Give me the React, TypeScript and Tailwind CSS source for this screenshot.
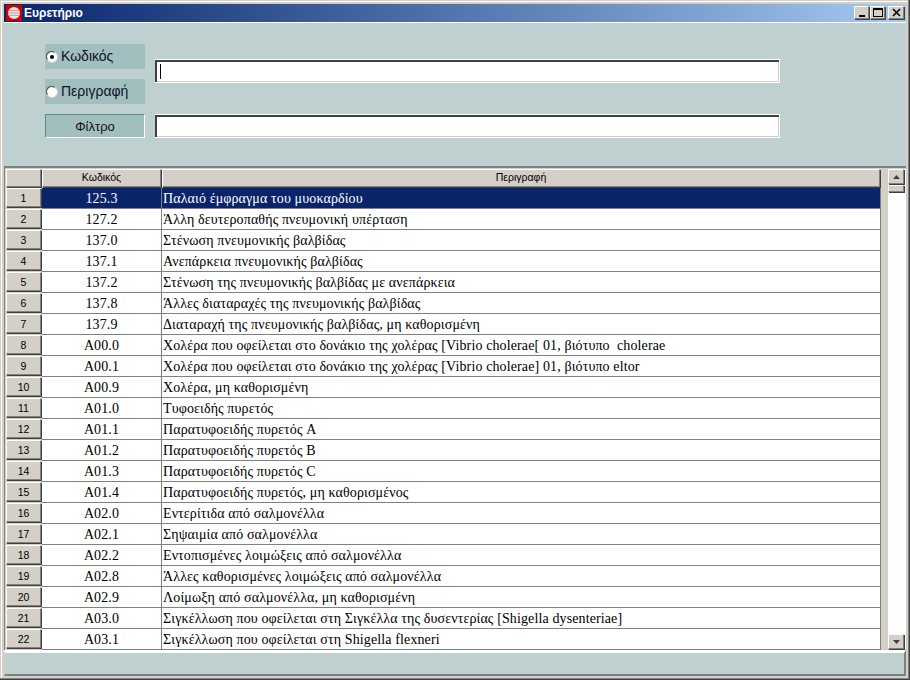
import React from 'react';

const rows: [string, string][] = [
  ['125.3', 'Παλαιό έμφραγμα του μυοκαρδίου'],
  ['127.2', 'Άλλη δευτεροπαθής πνευμονική υπέρταση'],
  ['137.0', 'Στένωση πνευμονικής βαλβίδας'],
  ['137.1', 'Ανεπάρκεια πνευμονικής βαλβίδας'],
  ['137.2', 'Στένωση της πνευμονικής βαλβίδας με ανεπάρκεια'],
  ['137.8', 'Άλλες διαταραχές της πνευμονικής βαλβίδας'],
  ['137.9', 'Διαταραχή της πνευμονικής βαλβίδας, μη καθορισμένη'],
  ['A00.0', 'Χολέρα που οφείλεται στο δονάκιο της χολέρας [Vibrio cholerae[ 01, βιότυπο  cholerae'],
  ['A00.1', 'Χολέρα που οφείλεται στο δονάκιο της χολέρας [Vibrio cholerae] 01, βιότυπο eltor'],
  ['A00.9', 'Χολέρα, μη καθορισμένη'],
  ['A01.0', 'Τυφοειδής πυρετός'],
  ['A01.1', 'Παρατυφοειδής πυρετός A'],
  ['A01.2', 'Παρατυφοειδής πυρετός B'],
  ['A01.3', 'Παρατυφοειδής πυρετός C'],
  ['A01.4', 'Παρατυφοειδής πυρετός, μη καθορισμένος'],
  ['A02.0', 'Εντερίτιδα από σαλμονέλλα'],
  ['A02.1', 'Σηψαιμία από σαλμονέλλα'],
  ['A02.2', 'Εντοπισμένες λοιμώξεις από σαλμονέλλα'],
  ['A02.8', 'Άλλες καθορισμένες λοιμώξεις από σαλμονέλλα'],
  ['A02.9', 'Λοίμωξη από σαλμονέλλα, μη καθορισμένη'],
  ['A03.0', 'Σιγκέλλωση που οφείλεται στη Σιγκέλλα της δυσεντερίας [Shigella dysenteriae]'],
  ['A03.1', 'Σιγκέλλωση που οφείλεται στη Shigella flexneri'],
];

const raised = 'border border-t-white border-l-white border-r-[#808080] border-b-[#808080] shadow-[1px_1px_0_#404040]';

function WinButton({ children, className = '' }: { children: React.ReactNode; className?: string }) {
  return (
    <div className={`h-[13px] mt-[2px] self-start bg-[#d4d0c8] flex items-center justify-center ${raised} ${className}`}>
      {children}
    </div>
  );
}

function Radio({ label, checked }: { label: string; checked?: boolean }) {
  return (
    <div className="h-[25px] bg-[#a2bfbf] flex items-center pl-[1px] gap-[3px]">
      <svg width="12" height="12" viewBox="0 0 12 12">
        <circle cx="6" cy="6" r="5.5" fill="#fff" stroke="#d4d0c8" />
        <path d="M1.5 8.5A5 5 0 0 1 8.5 1.5" fill="none" stroke="#606060" strokeWidth="1.2" />
        {checked && <circle cx="6" cy="6" r="2" fill="#000" />}
      </svg>
      <span className="text-[14px] text-[#10102a]">{label}</span>
    </div>
  );
}

function Input({ children }: { children?: React.ReactNode }) {
  return (
    <div className="w-[625px] h-[24px] border-t border-r border-b border-white">
      <div className="h-full bg-white shadow-[inset_2px_2px_0_#404040,inset_-1px_-1px_0_#d4d0c8] flex items-center pl-[5px]">
        {children}
      </div>
    </div>
  );
}

export default function App() {
  return (
    <div className="w-[910px] h-[680px] overflow-hidden bg-[#d4d0c8] border-r border-b border-r-[#404040] border-b-[#404040] font-['Liberation_Sans',sans-serif]">
      <div className="h-full border-r border-b border-r-[#808080] border-b-[#808080]">
        <div className="h-full border-t border-l border-t-[#d4d0c8] border-l-[#d4d0c8]">
          <div className="h-full border-t border-l border-t-white border-l-white pt-[2px] pl-[2px] pr-[2px] flex flex-col">
            {/* title bar */}
            <div className="h-[18px] shrink-0 flex items-center bg-gradient-to-r from-[#0a246a] to-[#a6caf0]">
              <div className="w-[16px] h-[16px] ml-[2px] bg-[#d00000] flex items-center justify-center">
                <svg width="14" height="14" viewBox="0 0 14 14">
                  <circle cx="7" cy="7" r="6" fill="#f4e0e0" />
                  <path d="M1.5 4.5h11M1 7h12M1.5 9.5h11" stroke="#c89090" strokeWidth="0.8" />
                </svg>
              </div>
              <span className="ml-[2px] text-[12px] font-bold text-white">Ευρετήριο</span>
              <div className="ml-auto mr-[2px] flex self-stretch">
                <WinButton className="w-[15px] mr-[1px]">
                  <div className="w-[6px] h-[2px] bg-black mt-[7px]" />
                </WinButton>
                <WinButton className="w-[15px] mr-[3px]">
                  <div className="w-[10px] h-[9px] border border-black border-t-2" />
                </WinButton>
                <WinButton className="w-[16px]">
                  <svg width="9" height="9" viewBox="0 0 9 9">
                    <path d="M1 1l7 7M8 1l-7 7" stroke="#000" strokeWidth="1.6" />
                  </svg>
                </WinButton>
              </div>
            </div>

            {/* search panel */}
            <div className="h-[144px] shrink-0 bg-[#bed1d0] border-t border-t-white flex items-start pl-[41px] pt-[21px]">
              <div className="w-[100px] flex flex-col gap-[10px]">
                <Radio label="Κωδικός" checked />
                <Radio label="Περιγραφή" />
                <div className="h-[24px] pt-[1px] bg-[#a2bfbf] border border-t-[#5f8a8a] border-l-[#5f8a8a] border-r-white border-b-white flex items-center justify-center text-[13px] text-[#101010]">
                  Φίλτρο
                </div>
              </div>
              <div className="ml-[10px] pt-[15px] flex flex-col gap-[31px]">
                <Input>
                  <div className="w-[1px] h-[15px] bg-black" />
                </Input>
                <Input />
              </div>
            </div>

            {/* grid */}
            <div className="h-[484px] shrink-0 bg-[#d4d0c8] border-t-2 border-t-[#808080] border-l border-l-[#808080] pt-[1px] pl-[1px] flex">
              <div className="w-[875px] shrink-0">
                <div className="flex h-[19px]">
                  <div className={`w-[35px] h-[18px] shrink-0 bg-[#d4d0c8] ${raised}`} />
                  <div className={`w-[119px] h-[18px] ml-[1px] shrink-0 bg-[#d4d0c8] flex items-center justify-center text-[10.5px] text-black ${raised}`}>Κωδικός</div>
                  <div className={`w-[718px] h-[18px] ml-[1px] shrink-0 bg-[#d4d0c8] flex items-center justify-center text-[10.5px] text-black ${raised}`}>Περιγραφή</div>
                </div>
                {rows.map(([code, desc], i) => (
                  <div key={code} className="flex h-[21px]">
                    <div className={`w-[35px] h-[19px] pt-[2px] shrink-0 bg-[#d4d0c8] flex items-center justify-center text-[10.5px] text-black ${raised}`}>{i + 1}</div>
                    <div className={`flex flex-1 ml-[1px] border-b border-r border-b-[#808080] border-r-[#808080] font-['Liberation_Serif',serif] text-[14px] tracking-[0.12px] ${i === 0 ? 'bg-[#0a246a] text-white' : 'bg-white text-black'}`}>
                      <div className="w-[120px] shrink-0 text-center leading-[22px] border-r border-r-[#808080]">{code}</div>
                      <div className="pl-[1px] leading-[22px] whitespace-pre">{desc}</div>
                    </div>
                  </div>
                ))}
              </div>
              {/* scrollbar */}
              <div className="ml-[7px] w-[18px] shrink-0 bg-white flex flex-col pr-[2px] h-[480px]">
                <div className={`h-[15px] shrink-0 bg-[#d4d0c8] flex items-center justify-center ${raised}`}>
                  <svg width="7" height="4" viewBox="0 0 7 4"><path d="M3.5 0L7 4H0z" fill="#404040" /></svg>
                </div>
                <div className={`h-[7px] mt-[1px] shrink-0 bg-[#d4d0c8] ${raised}`} />
                <div className="flex-1" />
                <div className={`h-[15px] shrink-0 bg-[#d4d0c8] flex items-center justify-center ${raised}`}>
                  <svg width="7" height="4" viewBox="0 0 7 4"><path d="M0 0H7L3.5 4z" fill="#404040" /></svg>
                </div>
              </div>
            </div>

            {/* status bar */}
            <div className="h-[26px] shrink-0 bg-[#bed1d0] border-t-[3px] border-t-white border-r-2 border-b-2 border-r-[#808080] border-b-[#808080] border-l border-l-[#d4d0c8]" />
          </div>
        </div>
      </div>
    </div>
  );
}
